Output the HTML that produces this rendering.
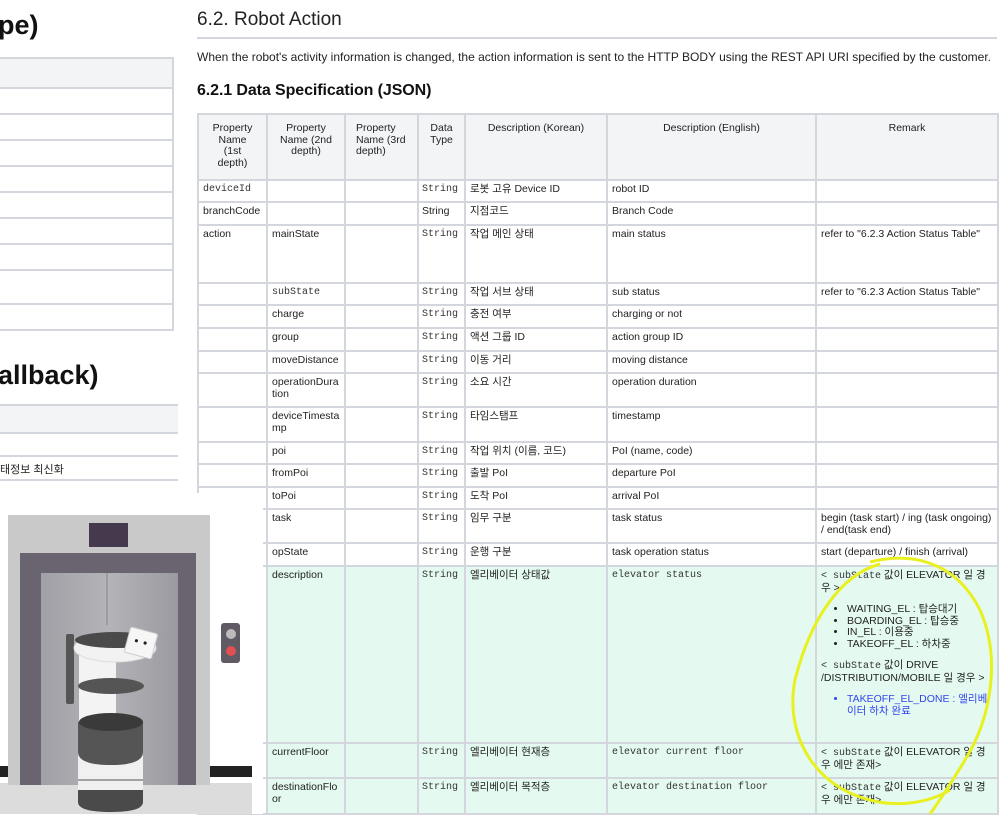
<!DOCTYPE html>
<html><head><meta charset="utf-8"><style>
*{margin:0;padding:0;box-sizing:border-box}
body{width:1002px;height:814px;overflow:hidden;background:#fff;position:relative;font-family:"Liberation Sans","Noto Sans CJK KR",sans-serif;color:#222}
.a{position:absolute}
table{border-collapse:collapse;table-layout:fixed;position:absolute;left:197px;top:113px;width:800px;font-size:10.5px}
td,th{border:2px solid #d3d6dc;vertical-align:top;padding:3px 4px;line-height:11.5px;overflow:hidden;overflow-wrap:anywhere;white-space:normal}
th{background:#f3f4f6;font-weight:normal;text-align:center;color:#222;padding:8px 10px 0}
.m{font-family:"Liberation Mono","Noto Sans CJK KR",monospace;color:#333;font-size:10px}
td.t{padding:3px 2px 3px 3px;white-space:nowrap}
.g td{background:#e4faf0}
.g td.w{background:#fff}
ul{margin:10px 0 10px 26px}
</style></head><body>
<div class="a" style="left:-2px;top:10px;font-size:27px;font-weight:bold;color:#111">pe)</div>
<div class="a" style="left:0;top:57px;width:174px;height:274px;border:2px solid #d3d6dc;border-left:none"></div>
<div class="a" style="left:0;top:59px;width:172px;height:28px;background:#f3f4f6"></div>
<div class="a" style="left:0;top:87px;width:172px;height:190px;background:repeating-linear-gradient(#d3d6dc 0 2px,#fff 2px 26px)"></div>
<div class="a" style="left:0;top:303px;width:174px;height:2px;background:#d3d6dc"></div>
<div class="a" style="left:-2px;top:360px;font-size:27px;font-weight:bold;color:#111">allback)</div>
<div class="a" style="left:0;top:404px;width:178px;height:30px;background:#f3f4f6;border-top:2px solid #d3d6dc;border-bottom:2px solid #d3d6dc"></div>
<div class="a" style="left:0;top:455px;width:178px;height:2px;background:#d3d6dc"></div>
<div class="a" style="left:0;top:479px;width:178px;height:2px;background:#d3d6dc"></div>
<div class="a" style="left:0;top:461px;font-size:11px">태정보 최신화</div>

<div class="a" style="left:197px;top:9px;font-size:19px;color:#222">6.2. Robot Action</div>
<div class="a" style="left:197px;top:37px;width:800px;height:2px;background:#d3d6dc"></div>
<div class="a" style="left:197px;top:50px;font-size:12px;letter-spacing:0px;white-space:nowrap">When the robot's activity information is changed, the action information is sent to the HTTP BODY using the REST API URI specified by the customer.</div>
<div class="a" style="left:197px;top:82px;font-size:16px;font-weight:bold;color:#111;letter-spacing:-0.1px">6.2.1 Data Specification (JSON)</div>

<table>
<colgroup><col style="width:69px"><col style="width:78px"><col style="width:73px"><col style="width:47px"><col style="width:142px"><col style="width:209px"><col style="width:182px"></colgroup>
<tr style="height:66px"><th>Property Name (1st depth)</th><th>Property Name (2nd depth)</th><th style="text-align:left">Property Name (3rd depth)</th><th style="padding:8px 4px 0">Data Type</th><th>Description (Korean)</th><th>Description (English)</th><th>Remark</th></tr>
<tr style="height:22px"><td class="m">deviceId</td><td></td><td></td><td class="m t">String</td><td>로봇 고유 Device ID</td><td>robot ID</td><td></td></tr>
<tr style="height:23px"><td>branchCode</td><td></td><td></td><td class="t">String</td><td>지점코드</td><td>Branch Code</td><td></td></tr>
<tr style="height:58px"><td>action</td><td>mainState</td><td></td><td class="m t">String</td><td>작업 메인 상태</td><td>main status</td><td style="white-space:nowrap">refer to "6.2.3 Action Status Table"</td></tr>
<tr style="height:22px"><td></td><td class="m">subState</td><td></td><td class="m t">String</td><td>작업 서브 상태</td><td>sub status</td><td style="white-space:nowrap">refer to "6.2.3 Action Status Table"</td></tr>
<tr style="height:23px"><td></td><td>charge</td><td></td><td class="m t">String</td><td>충전 여부</td><td>charging or not</td><td></td></tr>
<tr style="height:23px"><td></td><td>group</td><td></td><td class="m t">String</td><td>액션 그룹 ID</td><td>action group ID</td><td></td></tr>
<tr style="height:22px"><td></td><td style="white-space:nowrap">moveDistance</td><td></td><td class="m t">String</td><td>이동 거리</td><td>moving distance</td><td></td></tr>
<tr style="height:34px"><td></td><td>operationDuration</td><td></td><td class="m t">String</td><td>소요 시간</td><td>operation duration</td><td></td></tr>
<tr style="height:35px"><td></td><td>deviceTimestamp</td><td></td><td class="m t">String</td><td>타임스탬프</td><td>timestamp</td><td></td></tr>
<tr style="height:22px"><td></td><td>poi</td><td></td><td class="m t">String</td><td>작업 위치 (이름, 코드)</td><td>PoI (name, code)</td><td></td></tr>
<tr style="height:23px"><td></td><td>fromPoi</td><td></td><td class="m t">String</td><td>출발 PoI</td><td>departure PoI</td><td></td></tr>
<tr style="height:22px"><td></td><td>toPoi</td><td></td><td class="m t">String</td><td>도착 PoI</td><td>arrival PoI</td><td></td></tr>
<tr style="height:34px"><td></td><td>task</td><td></td><td class="m t">String</td><td>임무 구분</td><td>task status</td><td>begin (task start) / ing (task ongoing) / end(task end)</td></tr>
<tr style="height:23px"><td></td><td>opState</td><td></td><td class="m t">String</td><td>운행 구분</td><td>task operation status</td><td style="white-space:nowrap">start (departure) / finish (arrival)</td></tr>
<tr class="g" style="height:177px"><td class="w"></td><td>description</td><td></td><td class="m t">String</td><td>엘리베이터 상태값</td><td class="m">elevator status</td><td><span class="m">&lt; subState</span> 값이 ELEVATOR 일 경우 &gt;<ul><li>WAITING_EL : 탑승대기</li><li>BOARDING_EL : 탑승중</li><li>IN_EL : 이용중</li><li>TAKEOFF_EL : 하차중</li></ul><span class="m">&lt; subState</span> 값이 DRIVE /DISTRIBUTION/MOBILE 일 경우 &gt;<ul style="color:#3344ee"><li>TAKEOFF_EL_DONE : 엘리베이터 하차 완료</li></ul></td></tr>
<tr class="g" style="height:35px"><td class="w"></td><td>currentFloor</td><td></td><td class="m t">String</td><td>엘리베이터 현재층</td><td class="m">elevator current floor</td><td><span class="m">&lt; subState</span> 값이 ELEVATOR 일 경우 에만 존재&gt;</td></tr>
<tr class="g" style="height:36px"><td class="w"></td><td>destinationFloor</td><td></td><td class="m t">String</td><td>엘리베이터 목적층</td><td class="m">elevator destination floor</td><td><span class="m">&lt; subState</span> 값이 ELEVATOR 일 경우 에만 존재&gt;</td></tr>
</table>

<svg class="a" style="left:0;top:493px" width="263" height="321" viewBox="0 493 263 321">
<rect x="0" y="493" width="263" height="321" fill="#fff"/>
<rect x="0" y="766" width="252" height="11" fill="#222"/>
<rect x="0" y="783" width="252" height="31" fill="#dcdcdc"/>
<rect x="8" y="515" width="202" height="270" fill="#c9c9c9"/>
<rect x="89" y="523" width="39" height="24" fill="#453a4d"/>
<rect x="20" y="553" width="176" height="232" fill="#6a6370"/>
<defs><linearGradient id="d" x1="0" x2="1"><stop offset="0" stop-color="#a0a0a6"/><stop offset=".5" stop-color="#b3b3b8"/><stop offset="1" stop-color="#9a9aa0"/></linearGradient></defs>
<rect x="41" y="573" width="137" height="212" fill="url(#d)"/>
<line x1="107" y1="573" x2="107" y2="625" stroke="#888"/>
<rect x="221" y="623" width="19" height="40" rx="3" fill="#5f5a63"/>
<circle cx="231" cy="634" r="5" fill="#bbb"/><circle cx="231" cy="651" r="5" fill="#e05050"/>
<rect x="66" y="634" width="8" height="70" rx="2" fill="#555"/>
<rect x="79" y="640" width="37" height="130" fill="#f3f3f3"/>
<ellipse cx="115" cy="648" rx="41" ry="14" fill="#f2f2f2" stroke="#ddd"/>
<ellipse cx="115" cy="640" rx="40" ry="8" fill="#4a4a4a"/>
<g transform="rotate(15 141 643)"><rect x="127" y="630" width="28" height="26" rx="2" fill="#f6f6f6" stroke="#ccc"/><circle cx="136" cy="642" r="1.6" fill="#222"/><circle cx="145" cy="642" r="1.6" fill="#222"/></g>
<ellipse cx="111" cy="686" rx="33" ry="8" fill="#555"/>
<path d="M78 735 L78 795 Q78 808 111 808 Q143 808 143 795 L143 735 Z" fill="#f0f0f0"/>
<path d="M78 722 L78 752 Q78 765 111 765 Q143 765 143 752 L143 722 Z" fill="#555"/>
<ellipse cx="111" cy="722" rx="32" ry="9" fill="#3a3a3a"/>
<path d="M78 790 L78 802 Q78 812 111 812 Q143 812 143 802 L143 790 Z" fill="#4a4a4a"/>
<line x1="78" y1="780" x2="143" y2="780" stroke="#555"/>
</svg>

<svg class="a" style="left:780px;top:550px" width="222" height="264">
<path d="M90 12 C130 2 175 10 200 60 C222 110 210 170 185 210 C170 235 160 250 150 264 M100 14 C60 25 30 70 15 130 C5 180 30 235 90 250 C120 258 150 252 170 240" fill="none" stroke="#e8f020" stroke-width="3"/>
</svg>
</body></html>
